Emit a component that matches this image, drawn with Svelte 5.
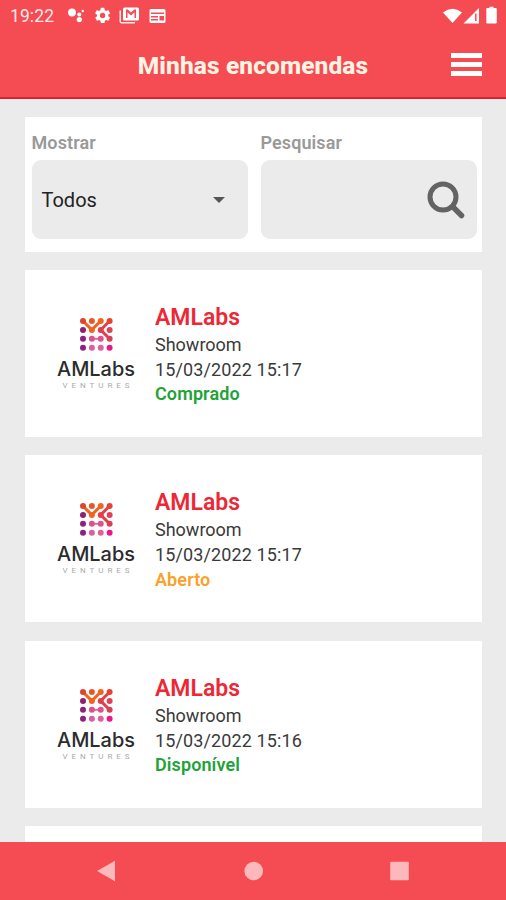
<script>
  const encomendas = [
    { id: 1, nome: "AMLabs", local: "Showroom", data: "15/03/2022 15:17", status: "Comprado" },
    { id: 2, nome: "AMLabs", local: "Showroom", data: "15/03/2022 15:17", status: "Aberto" },
    { id: 3, nome: "AMLabs", local: "Showroom", data: "15/03/2022 15:16", status: "Disponível" },
  ];

  // pontos do logo, linha por linha
  const linhas = [
    ["#d9482c", "#e8562c", "#f0641e", "#e8412f"],
    ["#8c2270", "#f0641e", "#e0404a", "#e0405a"],
    ["#8c2280", "#e0508c", "#e0508c", "#dc3f52"],
    ["#8c2280", "#d860a4", "#e0609c", "#f0148c"],
  ];

  let filtro = "Todos";
</script>

<div class="tela">
  <div class="status__bar">
    <span class="hora">19:22</span>
    <svg class="notificacoes" width="102" height="20" viewBox="0 0 102 20">
      <g fill="#fff">
        <circle cx="5" cy="6.5" r="3.9" />
        <circle cx="12.3" cy="8.6" r="2" />
        <circle cx="12.300" cy="13.6" r="2.6" />
        <circle cx="15.800" cy="5" r="1.2" />
        <g transform="translate(26.5 .3) scale(.76)">
          <path d="M19.4 13c0-.3.1-.6.1-1s0-.7-.1-1l2.1-1.6c.2-.2.3-.4.1-.6l-2-3.5c-.1-.2-.4-.3-.6-.2l-2.5 1c-.5-.4-1.1-.7-1.7-1l-.4-2.6c0-.3-.2-.5-.4-.5h-4c-.2 0-.4.2-.5.4l-.4 2.7c-.6.2-1.2.6-1.7 1l-2.5-1c-.2-.1-.5 0-.6.2l-2 3.5c-.1.2-.1.5.1.6L4.6 11c0 .3-.1.7-.1 1s0 .7.1 1l-2.1 1.6c-.2.2-.3.4-.1.6l2 3.5c.1.2.4.3.6.2l2.5-1c.5.4 1.1.7 1.7 1l.4 2.6c0 .3.2.5.5.5h4c.2 0 .5-.2.5-.4l.4-2.7c.6-.2 1.2-.6 1.7-1l2.5 1c.2.1.5 0 .6-.2l2-3.5c.1-.2.1-.5-.1-.6zM12 15.500a3.500 3.500 0 1 1 0-7 3.500 3.500 0 0 1 0 7z" fill-rule="evenodd" />
        </g>
        <path d="M54 4.500v11.500h14v1.500H54.500q-2 0-2-2V4.500z" opacity=".9" />
        <path d="M57.500 1.500h13q1.500 0 1.500 1.500v10q0 1.500-1.500 1.500h-13q-1.500 0-1.500-1.500V3q0-1.500 1.500-1.500zm1.500 2v8.500h1.500V6.300l3.500 3.200 3.500-3.200V12H69V3.500h-1.700L64 6.500l-3.300-3z" fill-rule="evenodd" />
        <path d="M84 3h13q1.500 0 1.500 1.500v11q0 1.500-1.500 1.500H84q-1.500 0-1.500-1.500v-11Q82.500 3 84 3zm0 3.500V8h13V6.500zM84 10v1.500h7V10zm0 3v1.500h7V13zm8.500-3v4.500H97V10z" fill-rule="evenodd" />
      </g>
    </svg>
    <svg class="sinais" width="56" height="20" viewBox="0 0 56 20">
      <path d="M1 8.500Q10.500 1.200 20 8.500L10.500 19z" fill="#fff" />
      <path d="M37 4v15.500H21.500z" fill="#fff" />
      <path d="M33.800 9.500V17" stroke="#f54b52" stroke-width="1.500" />
      <path d="M47.500 4V2.800h4V4h2.300q1 0 1 1v13.500q0 1-1 1h-8.500q-1 0-1-1V5q0-1 1-1z" fill="#fff" />
    </svg>
  </div>

  <header>
    <h1>Minhas encomendas</h1>
    <button class="menu" aria-label="Menu">
      <span></span>
      <span></span>
      <span></span>
    </button>
  </header>

  <main>
    <section class="filtros">
      <div class="campo">
        <p>Mostrar</p>
        <div class="caixa">
          <span>{filtro}</span>
          <svg class="seta" width="12" height="6" viewBox="0 0 12 6"><path d="M0 0h12L6 6z" fill="#555" /></svg>
        </div>
      </div>
      <div class="campo">
        <p>Pesquisar</p>
        <div class="caixa">
          <svg class="lupa" width="38" height="38" viewBox="0 0 38 38" fill="none" stroke="#636363">
            <circle cx="16" cy="16" r="13" stroke-width="5" />
            <path d="M26 26l8.500 8.500" stroke-width="5.500" stroke-linecap="round" />
          </svg>
        </div>
      </div>
    </section>

    {#each encomendas as encomenda (encomenda.id)}
      <article class="encomenda">
        <svg class="logo" width="82" height="74" viewBox="0 0 82 74">
          <g fill="none" stroke-width="3">
            <path d="M28 6l8.800 8.900L45.700 6" stroke="#f0641e" />
            <path d="M54.600 6l-8.900 8.900 8.900 8.900" stroke="#e0404a" />
            <path d="M36.900 23.800h8.800" stroke="#e0709c" stroke-width="2" />
          </g>
          {#each linhas as linha, i}
            {#each linha as cor, j}
              <circle cx={28 + j * 8.87} cy={6 + i * 8.9} r="3" fill={cor} />
            {/each}
          {/each}
          <text class="marca" x="2" y="60.500" textLength="78" lengthAdjust="spacingAndGlyphs">AMLabs</text>
          <text class="ventures" x="7.500" y="72.500" textLength="67">VENTURES</text>
        </svg>
        <div class="info">
          <h2>{encomenda.nome}</h2>
          <p>{encomenda.local}</p>
          <p class="data">{encomenda.data}</p>
          <p class="situacao {encomenda.status.toLowerCase()}">{encomenda.status}</p>
        </div>
      </article>
    {/each}
    <article class="encomenda"></article>
  </main>

  <nav>
    <svg width="20" height="22" viewBox="0 0 20 22"><path d="M0 11L18 0.700v20.500z" fill="#fcb8bb" /></svg>
    <svg width="20" height="22" viewBox="0 0 20 22"><circle cx="10.700" cy="11" r="9.300" fill="#fcb8bb" /></svg>
    <svg width="20" height="22" viewBox="0 0 20 22"><rect x="1.200" y="1.700" width="18.600" height="18.600" rx="1" fill="#fcb8bb" /></svg>
  </nav>
</div>

<style>
  :global(body) {
    background-color: #ebebeb;
  }
  .tela {
    display: flex;
    flex-direction: column;
    width: 506px;
    height: 900px;
    overflow: hidden;
    background-color: #ebebeb;
    font-family: Roboto, sans-serif;
  }
  h1, h2, p {
    margin: 0;
  }

/* barra de status */
  .status__bar {
    display: flex;
    align-items: center;
    flex: none;
    height: 32px;
    padding: 0 8px 0 10px;
    background-color: #f54b52;
    color: #ffe9ea;
  }
  .hora {
    width: 57px;
    font-size: 17.5px;
    letter-spacing: 0.1px;
  }
  .sinais {
    margin-left: auto;
    margin-bottom: 4px;
  }

/* header */
  header {
    display: grid;
    grid-template-columns: 60px 1fr 60px;
    align-items: center;
    flex: none;
    box-sizing: border-box;
    height: 67px;
    background-color: #f54b52;
    border-bottom: 2px solid #e01f30;
  }
  h1 {
    grid-column: 2;
    padding-top: 2px;
    text-align: center;
    font-size: 24.5px;
    font-weight: 800;
    letter-spacing: 0.1px;
    color: #fff3e3;
  }
  .menu {
    display: flex;
    flex-direction: column;
    gap: 4px;
    width: 31px;
    padding: 0;
    border: none;
    background: none;
    margin-left: 5px;
  }
  .menu span {
    height: 5px;
    background-color: #fff;
  }

/* conteudo */
  main {
    display: flex;
    flex-direction: column;
    flex: 1;
    gap: 18.3px;
    min-height: 0;
    overflow: hidden;
    padding: 18px 24px 0 25px;
  }
  .filtros {
    display: grid;
    grid-template-columns: 216px 216px;
    column-gap: 13px;
    flex: none;
    box-sizing: border-box;
    height: 134.5px;
    padding: 15px 6px 0 6.5px;
    background-color: #fff;
  }
  .campo p {
    line-height: 22px;
    margin-bottom: 6px;
    font-size: 18px;
    font-weight: 600;
    letter-spacing: 0.1px;
    color: #999;
  }
  .caixa {
    display: flex;
    align-items: center;
    justify-content: space-between;
    box-sizing: border-box;
    height: 79px;
    padding: 0 12px 0 10px;
    border-radius: 9px;
    background-color: #ebebeb;
    font-size: 20px;
    color: #222;
  }
  .seta {
    margin-right: 11px;
  }
  .lupa {
    margin-left: auto;
  }

/* encomendas */
  .encomenda {
    display: flex;
    flex: none;
    box-sizing: border-box;
    height: 167.2px;
    padding: 34px 30px 0;
    background-color: #fff;
  }
  .logo {
    flex: none;
    margin-top: 11px;
  }
  .marca {
    font-family: Inter, sans-serif;
    font-size: 20px;
    font-weight: 500;
    fill: #2c2c2c;
  }
  .ventures {
    font-size: 8px;
    fill: #aaa;
  }
  .info {
    margin-left: 18px;
    font-size: 18px;
    line-height: 24.8px;
    color: #3a3a3a;
  }
  .info h2 {
    margin-bottom: 2px;
    line-height: 27px;
    font-size: 23px;
    font-weight: 600;
    color: #ee2737;
  }
  .info .data {
    letter-spacing: 0.12px;
  }
  .info .situacao {
    font-weight: 600;
    letter-spacing: 0.1px;
  }
  .comprado, .disponível {
    color: #1fa338;
  }
  .aberto {
    color: #f9a12b;
  }

/* navegacao do android */
  nav {
    display: flex;
    align-items: center;
    justify-content: space-between;
    flex: none;
    box-sizing: border-box;
    height: 58px;
    padding: 0 97px;
    background-color: #f54b52;
  }
</style>
